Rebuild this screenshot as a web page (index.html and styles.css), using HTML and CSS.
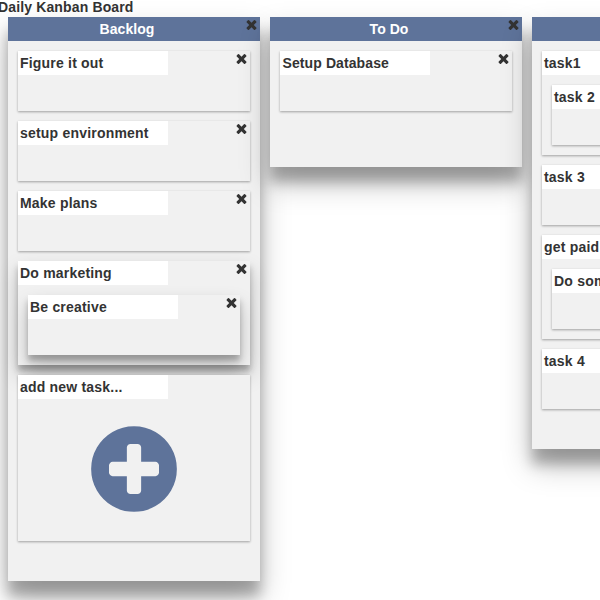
FILE: index.html
```html
<!DOCTYPE html>
<html lang="en">
<head>
<meta charset="utf-8">
<title>Daily Kanban Board</title>
<link rel="stylesheet" href="styles.css">
</head>
<body>
<svg class="symbols" aria-hidden="true">
  <symbol id="times" viewBox="0 0 1792 1792"><path d="M1490 1322q0 40-28 68l-136 136q-28 28-68 28t-68-28l-294-294-294 294q-28 28-68 28t-68-28l-136-136q-28-28-28-68t28-68l294-294-294-294q-28-28-28-68t28-68l136-136q28-28 68-28t68 28l294 294 294-294q28-28 68-28t68 28l136 136q28 28 28 68t-28 68l-294 294 294 294q28 28 28 68z"/></symbol>
</svg>
<h1 class="title">Daily Kanban Board</h1>
<main class="board">
  <section class="column">
    <header class="column-header">Backlog<svg class="close"><use href="#times"/></svg></header>
    <div class="tasks">
      <article class="task"><div class="name">Figure it out</div><svg class="close"><use href="#times"/></svg></article>
      <article class="task"><div class="name">setup environment</div><svg class="close"><use href="#times"/></svg></article>
      <article class="task"><div class="name">Make plans</div><svg class="close"><use href="#times"/></svg></article>
      <article class="task parent raised"><div class="name">Do marketing</div><svg class="close"><use href="#times"/></svg>
        <article class="task raised"><div class="name">Be creative</div><svg class="close"><use href="#times"/></svg></article>
      </article>
      <article class="task adder"><div class="name">add new task...</div>
        <svg class="plus" viewBox="0 0 1792 1792"><path d="M1344 960v-128q0-26-19-45t-45-19h-256v-256q0-26-19-45t-45-19h-128q-26 0-45 19t-19 45v256h-256q-26 0-45 19t-19 45v128q0 26 19 45t45 19h256v256q0 26 19 45t45 19h128q26 0 45-19t19-45v-256h256q26 0 45-19t19-45zm320-64q0 209-103 385.5t-279.5 279.5-385.5 103-385.5-103-279.5-279.5-103-385.5 103-385.5 279.5-279.5 385.5-103 385.5 103 279.5 279.5 103 385.5z"/></svg>
      </article>
    </div>
  </section>
  <section class="column">
    <header class="column-header">To Do<svg class="close"><use href="#times"/></svg></header>
    <div class="tasks">
      <article class="task"><div class="name inset">Setup Database</div><svg class="close"><use href="#times"/></svg></article>
    </div>
  </section>
  <section class="column">
    <header class="column-header"><svg class="close"><use href="#times"/></svg></header>
    <div class="tasks">
      <article class="task parent"><div class="name">task1</div><svg class="close"><use href="#times"/></svg>
        <article class="task"><div class="name">task 2</div><svg class="close"><use href="#times"/></svg></article>
      </article>
      <article class="task"><div class="name">task 3</div><svg class="close"><use href="#times"/></svg></article>
      <article class="task parent"><div class="name">get paid</div><svg class="close"><use href="#times"/></svg>
        <article class="task"><div class="name">Do something</div><svg class="close"><use href="#times"/></svg></article>
      </article>
      <article class="task"><div class="name">task 4</div><svg class="close"><use href="#times"/></svg></article>
    </div>
  </section>
</main>
</body>
</html>
```
FILE: styles.css
```css
* { box-sizing: border-box; }
html { overflow: hidden; }
body {
  margin: 0;
  height: 600px;
  overflow: hidden;
  background: #fff;
  color: #333;
  font: bold 14px/24px "Liberation Sans", Arial, sans-serif;
  letter-spacing: 0.2px;
}
.symbols { display: none; }
.title {
  margin: 0 0 0 -2px;
  height: 17px;
  font-size: 14px;
  line-height: 15px;
  letter-spacing: 0.14px;
}
.board {
  display: flex;
  align-items: flex-start;
  gap: 10px;
  padding-left: 8px;
}
.column {
  position: relative;
  flex: none;
  width: 252px;
  min-height: 150px;
  background: #f1f1f1;
  box-shadow: 0 16px 28px rgba(0, 0, 0, 0.25), 0 15px 12px rgba(0, 0, 0, 0.25);
}
.column-header {
  position: relative;
  height: 24px;
  padding-right: 14px;
  background: #5e739a;
  color: #fff;
  text-align: center;
  letter-spacing: 0.05px;
}
.tasks {
  display: flex;
  flex-direction: column;
  gap: 10px;
  padding: 10px 10px 40px;
}
.task {
  position: relative;
  height: 60px;
  background: #f1f1f1;
  box-shadow: 0 1px 3px rgba(0, 0, 0, 0.12), 0 1px 2px rgba(0, 0, 0, 0.24);
}
.raised {
  box-shadow: 0 10px 20px rgba(0, 0, 0, 0.2), 0 6px 6px rgba(0, 0, 0, 0.25);
}
.parent { height: 104px; }
.parent > .task { margin: 10px 10px 0; }
.adder { height: 166px; }
.name {
  width: 150px;
  height: 24px;
  padding-left: 2px;
  background: #fff;
  white-space: nowrap;
}
.inset {
  padding-left: 2.5px;
  letter-spacing: 0.1px;
}
.close {
  position: absolute;
  top: -0.5px;
  right: 1px;
  width: 15px;
  height: 15px;
  fill: #333;
}
.plus {
  display: block;
  width: 100px;
  height: 100px;
  margin: 20.3px auto 0;
  fill: #5e739a;
}
```
